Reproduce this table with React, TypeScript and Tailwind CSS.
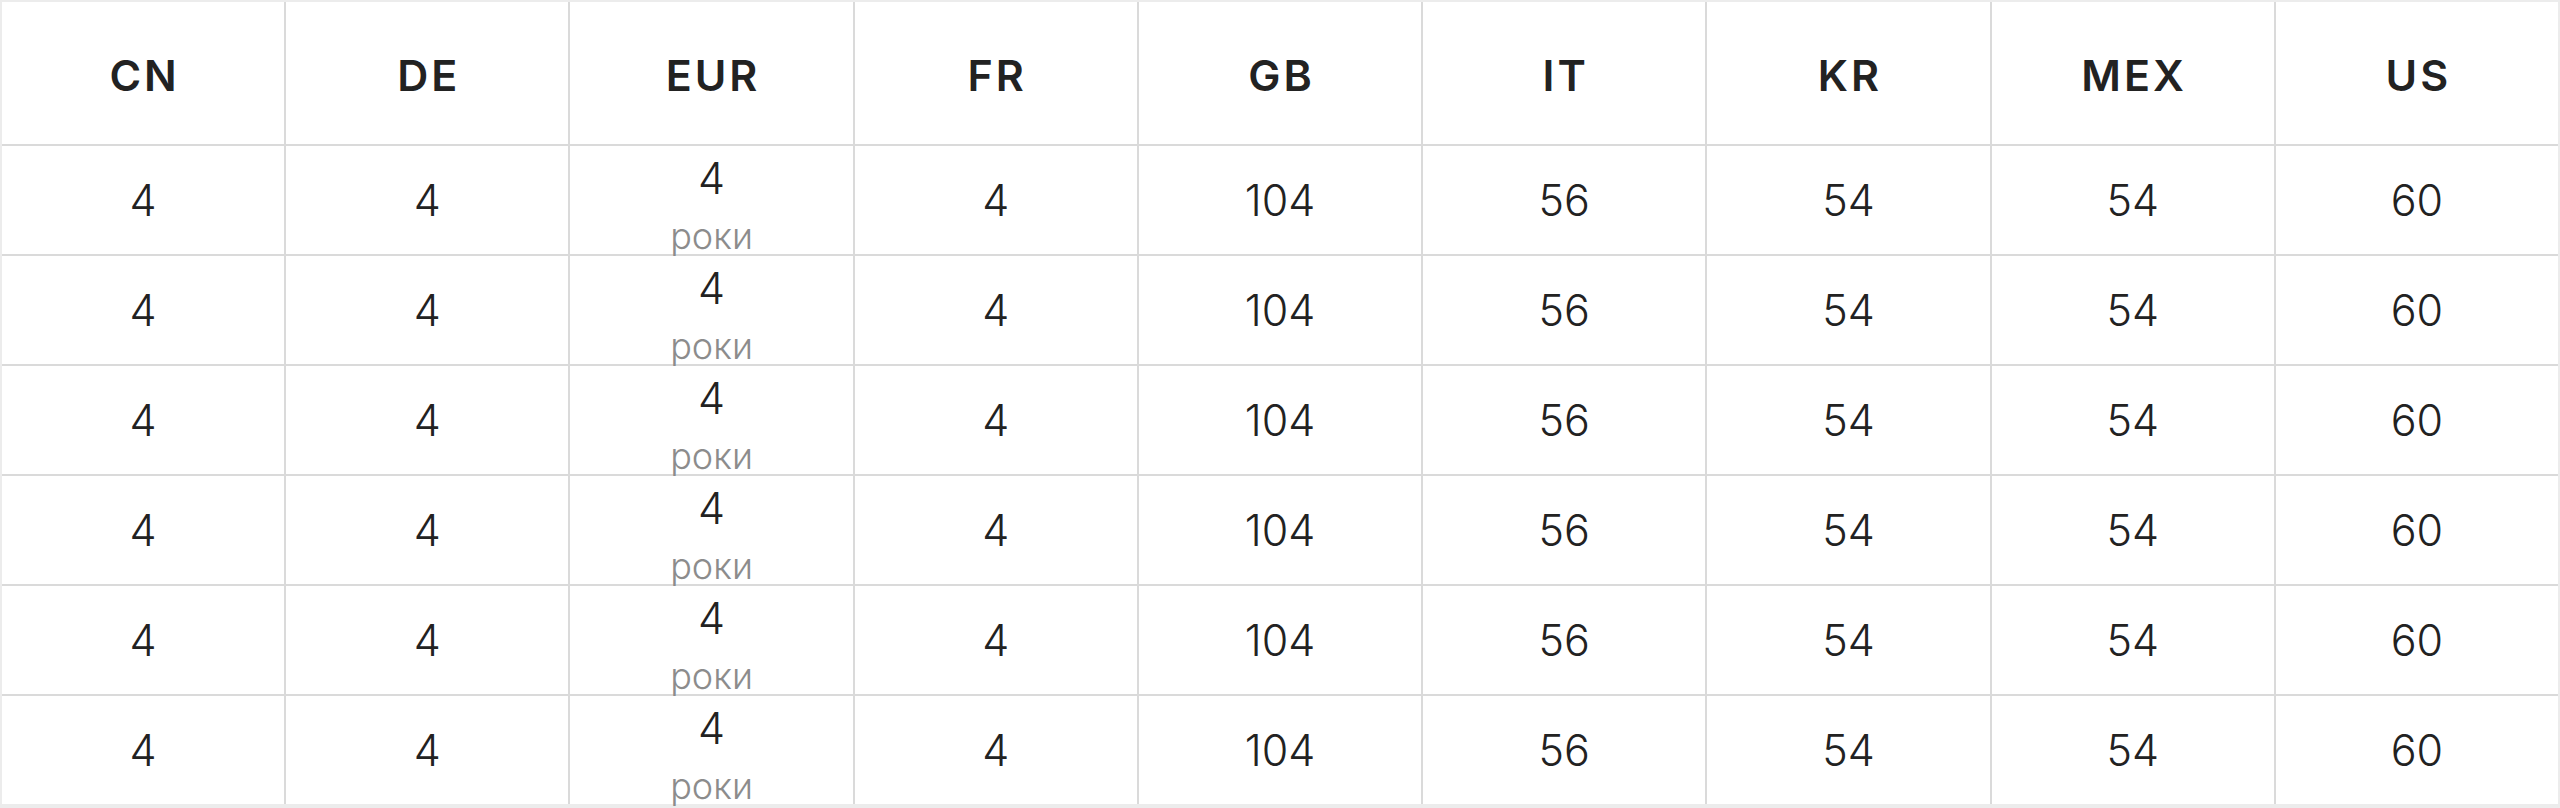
const headers = ["CN", "DE", "EUR", "FR", "GB", "IT", "KR", "MEX", "US"];

const row = ["4", "4", "4", "4", "104", "56", "54", "54", "60"];

const rows = Array.from({ length: 6 }).map(() => row);

const App = () => {
    return (
        <div className="h-[808px] w-[2560px] bg-[#ececec] px-[2px] pt-[2px] pb-[4px] font-['Inter',sans-serif] text-[#222222]">
            <div className="grid h-full grid-cols-9 grid-rows-[142px_repeat(6,108px)] gap-[2px] bg-[#dadada]">
                {/* Header */}
                {headers.map((h) => (
                    <div
                        key={h}
                        className="flex items-center justify-center bg-white pt-[5px] pl-[3px] text-[43px] font-semibold tracking-[3px]"
                    >
                        {h}
                    </div>
                ))}

                {/* Rows */}
                {rows.map((r, ri) =>
                    r.map((value, ci) =>
                        headers[ci] === "EUR" ? (
                            <div
                                key={`${ri}-${ci}`}
                                className="flex flex-col items-center justify-start bg-white pt-[11px]"
                            >
                                <span className="text-[43px] font-light leading-none">
                                    {value}
                                </span>
                                <span className="mt-[18px] text-[36px] font-light leading-none text-[#8c8c8c]">
                                    роки
                                </span>
                            </div>
                        ) : (
                            <div
                                key={`${ri}-${ci}`}
                                className="flex items-center justify-center bg-white text-[43px] font-light"
                            >
                                {value}
                            </div>
                        )
                    )
                )}
            </div>
        </div>
    );
};

export default App;
